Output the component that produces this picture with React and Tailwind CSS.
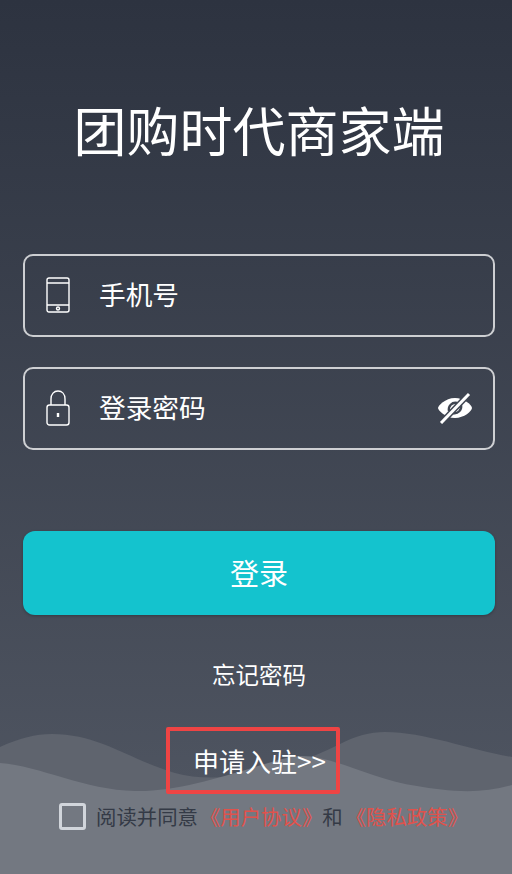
export default function App() {
  return (
    <div className="relative h-[874px] w-[512px] overflow-hidden bg-gradient-to-b from-[#2d3340] to-[#525864] font-['Noto_Sans_CJK_SC','Liberation_Sans',sans-serif] text-white">
      <svg className="absolute bottom-0 left-0" width="512" height="150" viewBox="0 724 512 150" aria-hidden="true">
        <path d="M0 747C20 738 35 734 52 734C100 734 130 760 175 773C220 786 290 770 340 744C355 736 370 732 385 732C425 732 470 750 512 757V874H0Z" fill="#5f646e" />
        <path d="M0 763C40 766 85 790 135 791C185 792 240 770 290 757C325 750 370 780 417 786C445 791 480 795 512 785V874H0Z" fill="#737881" />
      </svg>
      <div className="relative flex flex-col items-stretch pl-[23px] pr-[17px]">
        <h1 className="mt-[89px] h-[80px] whitespace-nowrap text-center text-[53px] leading-[80px] font-normal">团购时代商家端</h1>
        <div className="mt-[85px] flex h-[83px] items-center rounded-[10px] border-2 border-white/75 pb-[2px] pl-[21px]">
          <svg width="24" height="36" viewBox="0 0 24 36" fill="none" stroke="white" strokeWidth="1.4">
            <rect x="1" y="1" width="22" height="34" rx="2" />
            <path d="M1 6H23M1 28H23" />
            <circle cx="12" cy="31.5" r="1.5" />
          </svg>
          <span className="ml-[29px] text-[26.7px] leading-none">手机号</span>
        </div>
        <div className="mt-[30px] flex h-[83px] items-center rounded-[10px] border-2 border-white/75 pb-[2px] pl-[21px] pr-[21px]">
          <svg width="24" height="36" viewBox="0 0 24 36" fill="none" stroke="white" strokeWidth="1.4">
            <rect x="1" y="15" width="22" height="20" rx="2.5" />
            <path d="M5 15V9C5 4 8 1 12 1S19 4 19 9V15" />
            <path d="M12 23V27" strokeWidth="2.4" />
          </svg>
          <span className="ml-[29px] text-[26.7px] leading-none">登录密码</span>
          <svg className="ml-auto" width="34" height="32" viewBox="0 0 34 32" fill="none">
            <path d="M0 16C0 14 7 6 17 6C26 6 34 13 34 16C34 19 26 26 17 26C7 26 0 18 0 16Z" fill="white" />
            <path d="M11 19C10 14 14 10 19 11M23 13C24 18 20 22 15 21" stroke="#3f4551" strokeWidth="2.4" />
            <path d="M4 30L31 2" stroke="#3f4551" strokeWidth="6" />
            <path d="M3 31L31 2" stroke="white" strokeWidth="3" />
          </svg>
        </div>
        <button className="mt-[81px] h-[84px] rounded-[12px] bg-[#14c3ce] pb-[2px] text-[29px] leading-none text-white shadow-[0_1px_3px_rgba(0,0,0,0.25)]">登录</button>
        <div className="mt-[43px] h-[32px] text-center text-[23.5px] leading-[32px]">忘记密码</div>
        <div className="ml-[143px] mt-[37px] flex h-[67px] w-[174px] items-center rounded-[2px] border-[4px] border-[#ef4444] pl-[23px] text-[26px] leading-none">
          <span className="whitespace-nowrap">申请入驻&gt;&gt;</span>
        </div>
        <div className="ml-[36px] mt-[6px] flex h-[32px] items-center whitespace-nowrap text-[20.4px] leading-none">
          <span className="mr-[10px] h-[27px] w-[27px] rounded-[3px] border-[3px] border-[#d1d5db]" />
          <span className="text-[#343a46]">阅读并同意</span>
          <span className="ml-[2px] text-[#e0524c]">《用户协议》</span>
          <span className="text-[#343a46]">和</span>
          <span className="ml-[3px] text-[#e0524c]">《隐私政策》</span>
        </div>
      </div>
    </div>
  );
}
